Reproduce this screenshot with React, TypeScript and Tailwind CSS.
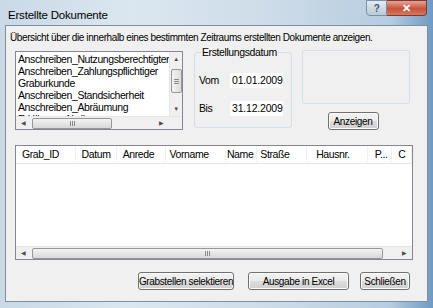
import React from 'react';

const font = { fontFamily: '"Liberation Sans", Arial, sans-serif' };

function Btn({ label, className }: { label: string; className: string }) {
  return (
    <div
      className={`flex items-center justify-center whitespace-nowrap rounded-[3px] border border-[#707070] bg-[linear-gradient(#f2f2f2_0%,#ebebeb_50%,#dddddd_51%,#cfcfcf_100%)] text-[10px] tracking-[-0.35px] text-black shadow-[inset_0_0_0_1px_#fcfcfc] ${className}`}
    >
      {label}
    </div>
  );
}

function VScroll() {
  return (
    <div className="flex w-[13px] flex-col items-center bg-[#f0f0f0] border-l border-[#e6e6e6]">
      <div className="h-[14px] flex items-center justify-center text-[6px] text-[#4d4d4d]">▲</div>
      <div className="mt-[3px] h-[24px] w-[11px] rounded-[2px] border border-[#979797] bg-[linear-gradient(to_right,#f3f3f3,#dcdcdc)] flex items-center justify-center">
        <div className="flex flex-col gap-[1px]">
          <div className="h-px w-[5px] bg-[#8a8a8a]" />
          <div className="h-px w-[5px] bg-[#8a8a8a]" />
          <div className="h-px w-[5px] bg-[#8a8a8a]" />
        </div>
      </div>
      <div className="flex-1" />
      <div className="h-[14px] flex items-center justify-center text-[6px] text-[#4d4d4d]">▼</div>
    </div>
  );
}

function HScroll({ thumbLeft, thumbWidth }: { thumbLeft: number; thumbWidth: number }) {
  return (
    <div className="relative flex h-[13px] items-center bg-[#f0f0f0] border-t border-[#e6e6e6]">
      <div className="w-[15px] text-center text-[6px] text-[#4d4d4d]">◀</div>
      <div
        className="absolute top-[1px] h-[11px] rounded-[2px] border border-[#979797] bg-[linear-gradient(#f3f3f3,#d8d8d8)] flex items-center justify-center"
        style={{ left: thumbLeft, width: thumbWidth }}
      >
        <div className="flex gap-[1px]">
          <div className="h-[5px] w-px bg-[#8a8a8a]" />
          <div className="h-[5px] w-px bg-[#8a8a8a]" />
          <div className="h-[5px] w-px bg-[#8a8a8a]" />
        </div>
      </div>
      <div className="flex-1" />
      <div className="w-[15px] text-center text-[6px] text-[#4d4d4d]">▶</div>
    </div>
  );
}

const items = [
  'Anschreiben_Nutzungsberechtigter',
  'Anschreiben_Zahlungspflichtiger',
  'Graburkunde',
  'Anschreiben_Standsicherheit',
  'Anschreiben_Abräumung',
  'Erklärung_Abräumung',
];

const cols: [string, number, string][] = [
  ['Grab_ID', 61, 'text-left pl-[6px]'],
  ['Datum', 42, 'text-left pl-[6px]'],
  ['Anrede', 50, 'text-left pl-[6px]'],
  ['Vorname', 62, 'text-left pl-[4px]'],
  ['Name', 32, 'text-right pr-[3px]'],
  ['Straße', 51, 'text-left pl-[3px]'],
  ['Hausnr.', 62, 'text-left pl-[9px]'],
  ['P...', 25, 'text-left pl-[7px]'],
  ['C', 20, 'text-left pl-[6px]'],
];

export default function App() {
  return (
    <div
      className="w-[433px] h-[308px] overflow-hidden bg-[linear-gradient(to_right,#c9d9e6_0%,#dbe7f0_30%,#cfdde9_60%,#b6cde0_90%,#6f9ac2_100%)] flex flex-col text-[10px] tracking-[-0.4px] text-black"
      style={font}
    >
      {/* Titelleiste */}
      <div className="relative h-[25px] flex items-start">
        <span className="pl-[8px] pt-[7px] text-[11.5px] tracking-[-0.2px] text-black">Erstellte Dokumente</span>
        <div className="absolute right-[6px] top-0 flex">
          <div className="w-[21px] h-[16px] rounded-bl-[4px] border border-[#7b8fa3] bg-[linear-gradient(#e3ebf2,#b9c9d8)] flex items-center justify-center text-[10px] font-bold text-[#42586d]">
            ?
          </div>
          <div className="w-[40px] h-[16px] rounded-br-[4px] border border-l-0 border-[#7a3a3a] bg-[linear-gradient(#e8a493,#c8523a_55%,#d67a5f)] flex items-center justify-center text-[11px] font-bold text-white">
            ✕
          </div>
        </div>
      </div>

      {/* Client-Bereich */}
      <div className="mx-[5px] mb-[6px] flex-1 border border-[#7b8ea2] bg-[#f0f0f0] flex flex-col">
        <div className="pl-[4px] pt-[5px] leading-[13px]">
          Übersicht über die innerhalb eines bestimmten Zeitraums erstellten Dokumente anzeigen.
        </div>

        <div className="flex mt-[1px]">
          {/* Liste */}
          <div className="ml-[9px] mt-[6px] w-[168px] h-[79px] border border-[#828790] bg-white flex flex-col">
            <div className="flex flex-1 overflow-hidden">
              <div className="flex-1 overflow-hidden pl-[2px] pt-[1px] text-[10.5px] leading-[12px] whitespace-nowrap">
                {items.map((t) => (
                  <div key={t}>{t}</div>
                ))}
              </div>
              <VScroll />
            </div>
            <div className="flex">
              <div className="flex-1">
                <HScroll thumbLeft={16} thumbWidth={80} />
              </div>
              <div className="w-[13px] h-[13px] bg-[#f0f0f0] border-t border-[#e6e6e6]" />
            </div>
          </div>

          {/* Erstellungsdatum */}
          <div className="relative ml-[11px] mt-[7px] w-[98px] h-[76px] border border-[#d5dfe5] rounded-[3px]">
            <span className="absolute left-[6px] -top-[8px] bg-[#f0f0f0] px-[1px] text-[10.5px]">
              Erstellungsdatum
            </span>
            <div className="mt-[19px] flex items-center">
              <span className="pl-[4px] w-[34px] text-[10.5px]">Vom</span>
              <div className="w-[55px] h-[17px] bg-white border border-[#f0f0f0] text-[10.5px] pl-[2px] leading-[15px] tracking-[-0.2px]">01.01.2009</div>
            </div>
            <div className="mt-[11px] flex items-center">
              <span className="pl-[4px] w-[34px] text-[10.5px]">Bis</span>
              <div className="w-[55px] h-[17px] bg-white border border-[#f0f0f0] text-[10.5px] pl-[2px] leading-[15px] tracking-[-0.2px]">31.12.2009</div>
            </div>
          </div>

          {/* rechts */}
          <div className="ml-[10px] flex flex-col items-center">
            <div className="mt-[5px] w-[108px] h-[54px] border border-[#d5dfe5] rounded-[3px]" />
            <Btn label="Anzeigen" className="mt-[8px] -ml-[6px] w-[51px] h-[18px]" />
          </div>
        </div>

        {/* Tabelle */}
        <div className="ml-[9px] mt-[15px] w-[398px] h-[115px] border border-[#828790] bg-white flex flex-col">
          <div className="flex h-[18px] border-b border-[#e5e5e5] bg-white text-[10.5px]">
            {cols.map(([c, w, cls]) => (
              <div
                key={c}
                className={`leading-[17px] border-r border-[#f0f0f0] whitespace-nowrap overflow-hidden ${cls}`}
                style={{ width: w }}
              >
                {c}
              </div>
            ))}
          </div>
          <div className="flex-1" />
          <HScroll thumbLeft={16} thumbWidth={351} />
        </div>

        {/* Schaltflächen */}
        <div className="flex mt-[12px]">
          <Btn label="Grabstellen selektieren" className="ml-[132px] w-[96px] h-[18px]" />
          <Btn label="Ausgabe in Excel" className="ml-[14px] w-[101px] h-[18px]" />
          <Btn label="Schließen" className="ml-[11px] w-[50px] h-[18px]" />
        </div>
      </div>
    </div>
  );
}
